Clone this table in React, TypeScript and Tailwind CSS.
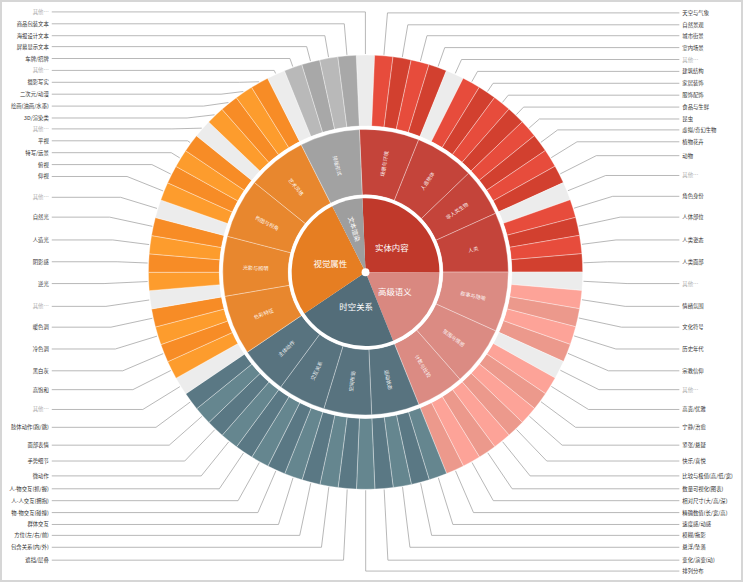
import React from 'react';

const CX = 366.5;
const CY = 272.5;
const N = 74;
const W = 360 / N;
const A0 = 2.4;
const R_IN = 74.5;
const R_M0 = 78;
const R_M1 = 144;
const R_O0 = 147.5;
const R_O1 = 219;

const rad = (a: number) => (a * Math.PI) / 180;
const pt = (r: number, a: number) => [CX + r * Math.sin(rad(a)), CY - r * Math.cos(rad(a))];

const arc = (r0: number, r1: number, a0: number, a1: number) => {
  const large = a1 - a0 > 180 ? 1 : 0;
  const [x1, y1] = pt(r1, a0);
  const [x2, y2] = pt(r1, a1);
  if (r0 <= 0) {
    return `M${CX},${CY}L${x1},${y1}A${r1},${r1} 0 ${large} 1 ${x2},${y2}Z`;
  }
  const [x3, y3] = pt(r0, a1);
  const [x4, y4] = pt(r0, a0);
  return `M${x1},${y1}A${r1},${r1} 0 ${large} 1 ${x2},${y2}L${x3},${y3}A${r0},${r0} 0 ${large} 0 ${x4},${y4}Z`;
};

// leaf names, from k = -1 (top) clockwise
const leaves = [
  '其他…', '天空与气象', '自然景观', '城市街景', '室内场景',
  '其他…', '建筑结构', '家居装饰', '服饰配饰', '食品与生鲜',
  '昆虫', '虚拟/奇幻生物', '植物花卉', '动物',
  '其他…', '角色身份', '人体部位', '人类姿态', '人类面部',
  '其他…', '情绪氛围', '文化符号', '历史年代', '宗教信仰',
  '其他…', '高贵/优雅', '宁静/治愈', '紧张/悬疑', '快乐/喜悦',
  '比较与极值(高/低/宽)', '数量可视化(图表)', '相对尺寸(大/高/深)', '精确数值(长/宽/高)',
  '速度感/动感', '模糊/拖影', '悬浮/坠落', '变化/演变(动)',
  '排列分布', '遮挡/层叠', '包含关系(内/外)', '方位(左/右/前)',
  '群体交互', '物-物交互(碰撞)', '人-人交互(拥抱)', '人-物交互(抓/握)',
  '微动作', '手势细节', '面部表情', '肢体动作(跑/跳)',
  '其他…', '高饱和', '黑白灰', '冷色调', '暖色调',
  '其他…', '逆光', '阴影感', '人造光', '自然光',
  '其他…', '仰视', '俯视', '特写/远景', '平视',
  '其他…', '3D/渲染类', '绘画(油画/水墨)', '二次元/动漫', '摄影写实',
  '其他…', '车牌/招牌', '屏幕显示文本', '海报设计文本', '商品包装文本',
];

const RIGHT_Y = [11, 23, 34, 46, 58, 70, 82, 94, 106, 118, 129, 141, 155, 175, 196, 217, 240, 262, 284, 307, 328, 350, 372, 391, 411, 429, 447, 463, 478, 491, 503, 515, 527, 538, 550, 563, 574];
const LEFT_Y = [10, 22, 34, 45, 57, 69, 81, 93, 105, 117, 128, 140, 152, 164, 176, 197, 217, 240, 262, 284, 307, 328, 350, 372, 391, 411, 429, 447, 463, 478, 491, 503, 515, 527, 538, 550, 563];

type Cat = {
  name: string;
  inner: string;
  middle: string;
  light: string;
  dark: string;
  segs: { name: string; s: number; c: number }[];
  label: { x: number; y: number; rot?: number; size?: number };
};

const cats: Cat[] = [
  {
    name: '实体内容', inner: '#c0392b', middle: '#c4443a', light: '#e74c3c', dark: '#d2402f',
    segs: [
      { name: '场景与环境', s: -1, c: 5 },
      { name: '人造物体', s: 4, c: 5 },
      { name: '非人类生物', s: 9, c: 4 },
      { name: '人类', s: 13, c: 5 },
    ],
    label: { x: 393, y: 247 },
  },
  {
    name: '高级语义', inner: '#d98880', middle: '#db8b83', light: '#fda398', dark: '#ec998c',
    segs: [
      { name: '叙事与隐喻', s: 18, c: 5 },
      { name: '氛围与情感', s: 23, c: 5 },
      { name: '计数与比较', s: 28, c: 4 },
    ],
    label: { x: 396, y: 292 },
  },
  {
    name: '时空关系', inner: '#536d79', middle: '#58737f', light: '#65868f', dark: '#5a7884',
    segs: [
      { name: '运动状态', s: 32, c: 4 },
      { name: '空间布局', s: 36, c: 4 },
      { name: '交互关系', s: 40, c: 4 },
      { name: '主体动作', s: 44, c: 4 },
    ],
    label: { x: 357, y: 307 },
  },
  {
    name: '视觉属性', inner: '#e67e22', middle: '#e8872e', light: '#fd9c2d', dark: '#f78c26',
    segs: [
      { name: '色彩特征', s: 48, c: 5 },
      { name: '光影与照明', s: 53, c: 5 },
      { name: '构图与视角', s: 58, c: 5 },
      { name: '艺术风格', s: 63, c: 5 },
    ],
    label: { x: 331, y: 263 },
  },
  {
    name: '文本渲染', inner: '#9e9e9e', middle: '#a2a2a2', light: '#b9b9b9', dark: '#a8a8a8',
    segs: [{ name: '排版形式', s: 68, c: 5 }],
    label: { x: 355, y: 229, rot: 73, size: 6.5 },
  },
];

const OTHER = '#ececec';

const Sunburst: React.FC = () => {
  const innerArcs: React.ReactNode[] = [];
  const middleArcs: React.ReactNode[] = [];
  const outerArcs: React.ReactNode[] = [];
  const middleLabels: React.ReactNode[] = [];

  cats.forEach((cat) => {
    const first = cat.segs[0].s;
    const lastSeg = cat.segs[cat.segs.length - 1];
    const last = lastSeg.s + lastSeg.c;
    innerArcs.push(
      <path key={cat.name} d={arc(0, R_IN, A0 + first * W, A0 + last * W)} fill={cat.inner} />
    );
    cat.segs.forEach((seg) => {
      const a0 = A0 + seg.s * W;
      const a1 = A0 + (seg.s + seg.c) * W;
      middleArcs.push(
        <path key={seg.name} d={arc(R_M0, R_M1, a0, a1)} fill={cat.middle} stroke="#ffffff" strokeOpacity={0.55} strokeWidth={0.6} />
      );
      const mid = ((a0 + a1) / 2 + 360) % 360;
      const [tx, ty] = pt(111, mid);
      const rot = mid < 180 ? mid - 90 : mid - 270;
      middleLabels.push(
        <text
          key={`t-${seg.name}`}
          x={tx}
          y={ty}
          fontSize={5.2}
          fill="#ffffff"
          fillOpacity={0.92}
          textAnchor="middle"
          dominantBaseline="central"
          transform={`rotate(${rot} ${tx} ${ty})`}
        >
          {seg.name}
        </text>
      );
      let n = 0;
      for (let k = seg.s; k < seg.s + seg.c; k++) {
        const name = leaves[k + 1];
        const other = name === '其他…';
        const fill = other ? OTHER : n % 2 === 0 ? cat.light : cat.dark;
        if (!other) n++;
        outerArcs.push(
          <path key={`o-${k}`} d={arc(R_O0, R_O1, A0 + k * W, A0 + (k + 1) * W)} fill={fill} stroke="#ffffff" strokeOpacity={0.7} strokeWidth={0.5} />
        );
      }
    });
  });

  const leaders = leaves.map((name, idx) => {
    const k = idx - 1;
    const mid = A0 + (k + 0.5) * W;
    const right = k >= 0 && k <= 36;
    const ly = right ? RIGHT_Y[k] : LEFT_Y[k === -1 ? 0 : 73 - k];
    const dx = Math.sin(rad(mid));
    const dy = -Math.cos(rad(mid));
    const px = CX + (R_O1 + 1) * dx;
    const py = CY + (R_O1 + 1) * dy;
    let t = Math.abs(dy) > 1e-3 ? (ly - py) / dy : -1;
    if (t < 0) t = 40;
    if (t > 44) t = 44;
    const bx = px + t * dx;
    const ex = right ? 683 : 50;
    const other = name === '其他…';
    return (
      <g key={`l-${k}`}>
        <polyline points={`${px},${py} ${bx},${ly} ${ex},${ly}`} fill="none" stroke="#a6a6a6" strokeWidth={0.8} />
        <text
          x={right ? 686 : 47}
          y={ly}
          fontSize={5.4}
          fill={other ? '#b0b0b0' : '#333333'}
          textAnchor={right ? 'start' : 'end'}
          dominantBaseline="central"
        >
          {name}
        </text>
      </g>
    );
  });

  return (
    <svg viewBox="0 0 745 583" className="w-full h-full font-['Noto_Sans_CJK_SC','Liberation_Sans',sans-serif]">
      {leaders}
      {outerArcs}
      <circle cx={CX} cy={CY} r={R_O0} fill="#ffffff" />
      {middleArcs}
      <circle cx={CX} cy={CY} r={R_M0} fill="#ffffff" />
      {innerArcs}
      {middleLabels}
      {cats.map((cat) => (
        <text
          key={`c-${cat.name}`}
          x={cat.label.x}
          y={cat.label.y}
          fontSize={cat.label.size ?? 8.5}
          fill="#ffffff"
          textAnchor="middle"
          dominantBaseline="central"
          transform={cat.label.rot ? `rotate(${cat.label.rot} ${cat.label.x} ${cat.label.y})` : undefined}
        >
          {cat.name}
        </text>
      ))}
      <circle cx={CX} cy={CY} r={4} fill="#ffffff" />
    </svg>
  );
};

const App: React.FC = () => {
  return (
    <div className="w-[745px] h-[583px] bg-white">
      <div className="w-[743px] h-[582px] border-2 border-[#d6d6d6] bg-white">
        <Sunburst />
      </div>
    </div>
  );
};

export default App;
